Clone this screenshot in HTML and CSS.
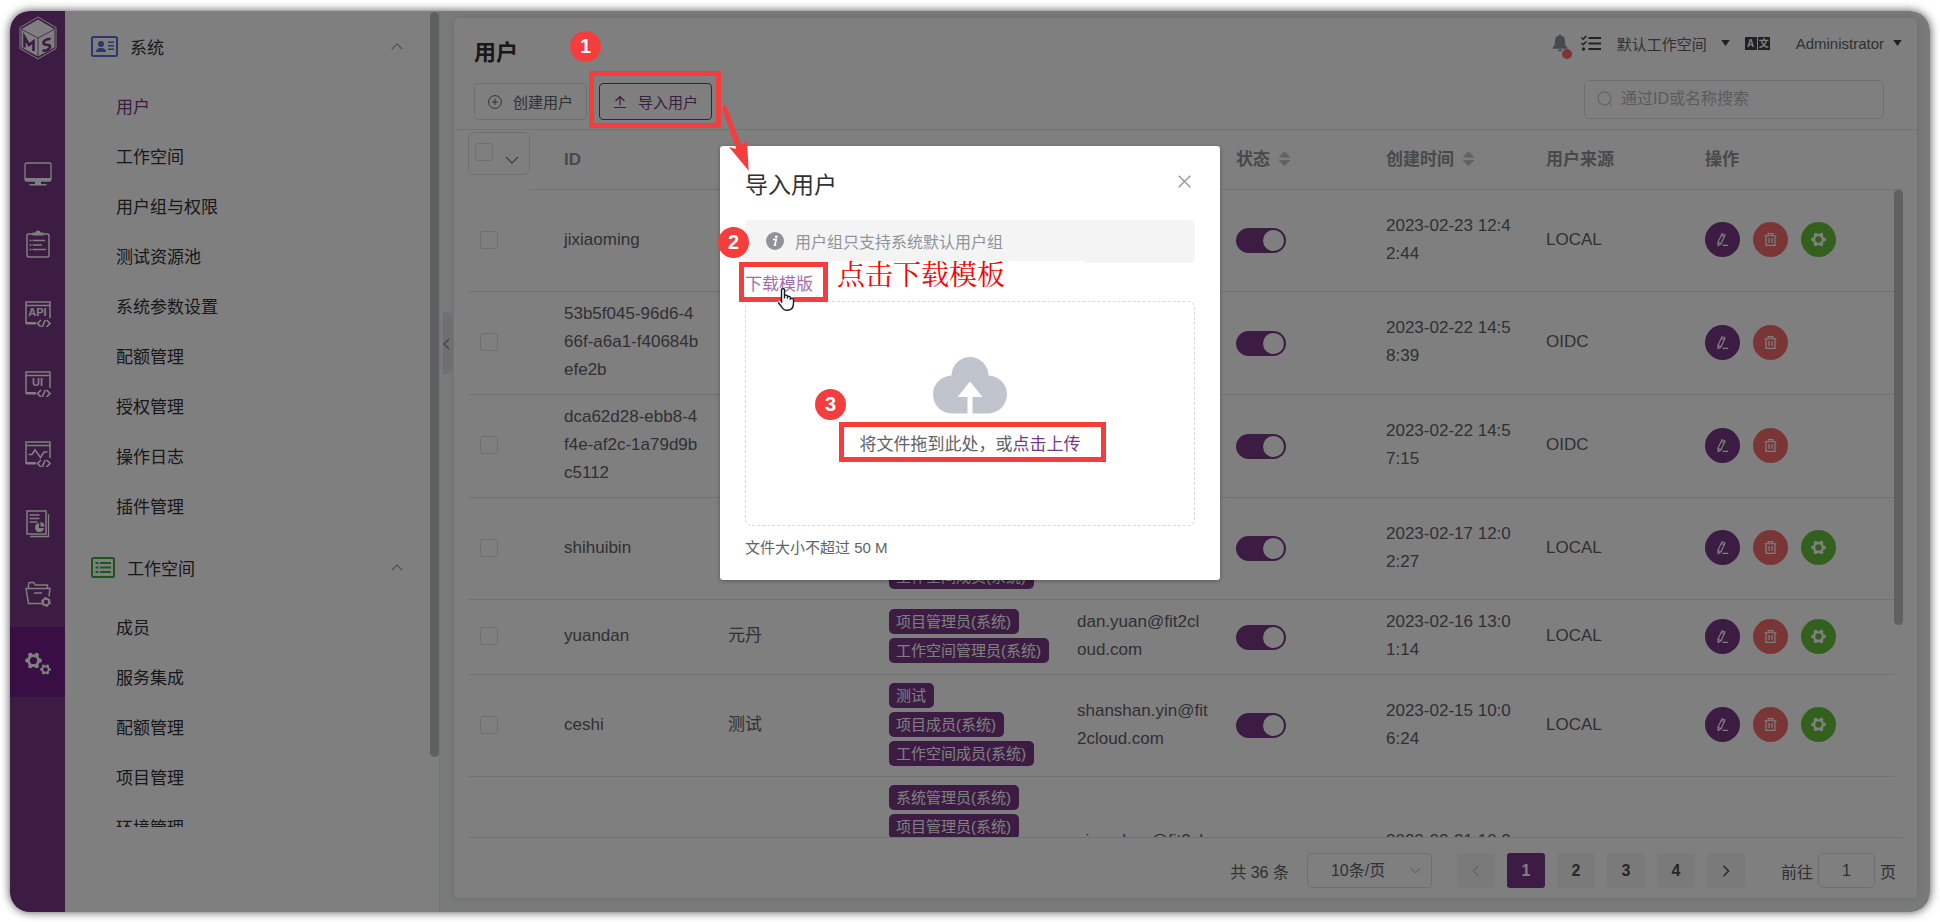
FILE: index.html
```html
<!DOCTYPE html>
<html lang="zh-CN">
<head>
<meta charset="utf-8">
<title>用户</title>
<link rel="stylesheet" href="styles.css">
</head>
<body>
<svg class="sprite" aria-hidden="true">
  <symbol id="i-up" viewBox="0 0 14 8"><path d="M1 7l6-6 6 6" fill="none" stroke="currentColor" stroke-width="1.3"/></symbol>
  <symbol id="i-down" viewBox="0 0 14 8"><path d="M1 1l6 6 6-6" fill="none" stroke="currentColor" stroke-width="1.3"/></symbol>
  <symbol id="i-left" viewBox="0 0 8 14"><path d="M7 1L1 7l6 6" fill="none" stroke="currentColor" stroke-width="1.4"/></symbol>
  <symbol id="i-right" viewBox="0 0 8 14"><path d="M1 1l6 6-6 6" fill="none" stroke="currentColor" stroke-width="1.6"/></symbol>
  <symbol id="i-caret" viewBox="0 0 10 7"><path d="M0 0h10L5 7z" fill="currentColor"/></symbol>
  <symbol id="i-sort" viewBox="0 0 12 16"><path d="M0 6.500L6 0l6 6.500zM0 9h12l-6 6.500z" fill="currentColor"/></symbol>
  <symbol id="i-edit" viewBox="0 0 16 16"><g fill="none" stroke="currentColor" stroke-width="1.3"><path d="M7.500 1.800l3.200 1.400-4.300 9.300-3 1.800-.3-3.300zM6.700 3.600l3.200 1.400M3.200 11l3.200 1.500M8 14.300h6"/></g></symbol>
  <symbol id="i-trash" viewBox="0 0 16 16"><g fill="none" stroke="currentColor" stroke-width="1.300"><path d="M1.500 4h13M5.500 4V1.800h5V4M3.200 4v10.300h9.600V4M6.400 6.500v5.300M9.600 6.500v5.300"/></g></symbol>
  <symbol id="i-gear" viewBox="0 0 16 16"><circle cx="8" cy="8" r="4.700" fill="none" stroke="currentColor" stroke-width="2.600"/><g fill="currentColor"><circle cx="5" cy="2.900" r="2.100"/><circle cx="11" cy="2.900" r="2.100"/><circle cx="13.800" cy="8" r="2.100"/><circle cx="11" cy="13.100" r="2.100"/><circle cx="5" cy="13.100" r="2.100"/><circle cx="2.200" cy="8" r="2.100"/></g></symbol>
  <symbol id="i-window" viewBox="0 0 26 26"><path d="M10 22H1V1h24v16M1 4.500h24" fill="none" stroke="currentColor" stroke-width="1.500"/><path d="M1 21h10v2.500H1z" fill="currentColor"/><path d="M16 19l-3.500 3.500L16 26M21.500 19l3.500 3.500-3.500 3.500M20.200 19l-3 7" fill="none" stroke="currentColor" stroke-width="1.700"/></symbol>
</svg>

<div class="app">
  <nav class="rail" aria-label="主导航">
    <a class="logo" href="#" aria-label="MS">
      <svg width="38" height="44" viewBox="0 0 38 44"><path d="M19 1l18 10.500v21L19 43 1 32.500v-21z" fill="none" stroke="#fff" stroke-width="1"/><path d="M19 3.500L35.500 13v18.500L19 40.500 2.500 31.500V13z" fill="#fff"/><path d="M3 13.500l16 8.500 16-8.500M19 22v18.500" fill="none" stroke="#783887" stroke-width=".8"/><g fill="none" stroke="#783887" stroke-width="2.600"><path d="M5.500 31.500V21l4.500 8 4.500-3.500V35"/><path d="M31.500 23.500c-2-1.500-7 .8-7 3.800 0 2.800 6.500.2 6.500 3.200 0 2.500-5 5.500-7.500 3.500"/></g></svg>
    </a>
    <a href="#" aria-label="工作台"><svg width="28" height="24" viewBox="0 0 28 24"><rect x="1" y="1" width="26" height="18" rx="1.500" fill="none" stroke="currentColor" stroke-width="1.300"/><path d="M1 16h26v3H1zM11 19h6v3h-6zM5.500 22h17v1.500h-17z" fill="currentColor"/></svg></a>
    <a href="#" aria-label="测试跟踪"><svg width="24" height="28" viewBox="0 0 24 28"><rect x="1" y="4" width="22" height="23" rx="1.500" fill="none" stroke="currentColor" stroke-width="1.500"/><path d="M6.500 2.500h3a2.500 2 0 0 1 5 0h3v3h-11z" fill="currentColor"/><path d="M3.500 10.500h2M6.500 10.500h12.500M3.500 15h2M6.500 15h9.500M3.500 19.500h2M6.500 19.500h13.500" stroke="currentColor" stroke-width="1.300"/></svg></a>
    <a href="#" class="win"><svg width="26" height="26"><use href="#i-window"/></svg><b>API</b></a>
    <a href="#" class="win"><svg width="26" height="26"><use href="#i-window"/></svg><b>UI</b></a>
    <a href="#" aria-label="性能测试"><svg width="26" height="26" viewBox="0 0 26 26"><use href="#i-window"/><path d="M3.500 13.500h3.500l3-4.500 5.500 7.500 3.500-5.500h3.500" fill="none" stroke="currentColor" stroke-width="1.600"/></svg></a>
    <a href="#" aria-label="报表统计"><svg width="24" height="28" viewBox="0 0 24 28"><path d="M1 1h19v23H1z" fill="none" stroke="currentColor" stroke-width="1.500"/><path d="M22.500 4v22.500H4" fill="none" stroke="currentColor" stroke-width="1.300"/><path d="M3.500 5h10M3.500 8.500h10M3.500 12h8" stroke="currentColor" stroke-width="1.400"/><path d="M13 13v5h5a4.500 4.500 0 1 1-5-5z" fill="currentColor"/><path d="M14.500 12a4.500 4.500 0 0 1 4 4.500h-4z" fill="currentColor"/></svg></a>
    <a href="#" aria-label="项目设置"><svg width="26" height="26" viewBox="0 0 26 26"><path d="M3.500 7V3l1-1.500h4l2 2.500h12V7M17 22.500H3.500L1 7.500h24l-1 8M9 12h8" fill="none" stroke="currentColor" stroke-width="1.500"/><circle cx="21" cy="21" r="3.200" fill="none" stroke="currentColor" stroke-width="2"/><circle cx="21" cy="21" r="4.500" fill="none" stroke="currentColor" stroke-width="1" stroke-dasharray="2.300 2.400"/></svg></a>
    <a href="#" class="active" aria-label="系统设置"><svg width="26" height="24" viewBox="0 0 26 24"><svg x="0" y="0" width="17" height="17"><use href="#i-gear"/></svg><svg x="15" y="12" width="11" height="11"><use href="#i-gear"/></svg></svg></a>
  </nav>

  <aside class="aside">
    <div class="menu">
      <button class="group" type="button"><svg width="27" height="21" viewBox="0 0 27 21"><rect x="1" y="1" width="25" height="19" rx="1.500" fill="none" stroke="#5670e0" stroke-width="2"/><g fill="#5670e0"><circle cx="10" cy="8" r="3"/><path d="M5 16c0-3 2-4 5-4s5 1 5 4zM17 5.500h6v1.600h-6zM17 9h6v1.600h-6zM17 12.500h6v1.600h-6z"/></g></svg>系统<svg class="fold" width="12" height="7"><use href="#i-up"/></svg></button>
      <a class="on" href="#">用户</a>
      <a href="#">工作空间</a>
      <a href="#">用户组与权限</a>
      <a href="#">测试资源池</a>
      <a href="#">系统参数设置</a>
      <a href="#">配额管理</a>
      <a href="#">授权管理</a>
      <a href="#">操作日志</a>
      <a href="#">插件管理</a>
      <button class="group" type="button"><svg width="24" height="21" viewBox="0 0 24 21"><rect x="1" y="1" width="22" height="19" rx="1.500" fill="none" stroke="#3bab3e" stroke-width="2"/><path d="M4.500 6h3M9 6h11M4.500 10.500h3M9 10.500h11M4.500 15h3M9 15h11" stroke="#3bab3e" stroke-width="2.200"/></svg>工作空间<svg class="fold" width="12" height="7"><use href="#i-up"/></svg></button>
      <a href="#">成员</a>
      <a href="#">服务集成</a>
      <a href="#">配额管理</a>
      <a href="#">项目管理</a>
      <a href="#">环境管理</a>
    </div>
    <span class="thumb"></span>
    <button class="collapse" type="button" aria-label="收起"><svg width="7" height="12"><use href="#i-left"/></svg></button>
  </aside>

  <main class="card">
    <header class="head">
      <div class="title-row">
        <h1>用户</h1>
        <div class="tools">
          <span class="bell"><svg width="16" height="18" viewBox="0 0 16 18"><path d="M8 0l1.200 1.500C12 2.200 13 4.500 13 7c0 4 1 5.500 2.500 7v.8H.5V14C2 12.500 3 11 3 7c0-2.500 1-4.800 3.800-5.500zM6 15.500h4a2 2 0 0 1-4 0z" fill="#909399"/></svg><i></i></span>
          <svg class="tasks" width="20" height="16" viewBox="0 0 20 16"><path d="M7.500 3H20M7.500 8.500H20M7.500 14H20" stroke="#3f4246" stroke-width="2"/><path d="M.5 2.500L2.200 4.200 5.500.8M.5 8l1.700 1.700 3.300-3.400" fill="none" stroke="#3f4246" stroke-width="1.400"/><circle cx="2.500" cy="14" r="1.700" fill="#3f4246"/></svg>
          <button class="drop space" type="button">默认工作空间<svg width="9" height="6"><use href="#i-caret"/></svg></button>
          <button class="lang" type="button" aria-label="语言"><b>A</b><b>文</b></button>
          <button class="drop user" type="button">Administrator<svg width="9" height="6"><use href="#i-caret"/></svg></button>
        </div>
      </div>
      <div class="action-row">
        <button class="btn" type="button"><svg width="14" height="14" viewBox="0 0 14 14"><g fill="none" stroke="currentColor"><circle cx="7" cy="7" r="6.400"/><path d="M4 7h6M7 4v6"/></g></svg>创建用户</button>
        <button class="btn primary" type="button"><svg width="14" height="14" viewBox="0 0 14 14"><path d="M1 12.500h12M7 10.500V2M2.500 6L7 1.700 11.500 6" fill="none" stroke="currentColor" stroke-width="1.200"/></svg>导入用户</button>
        <label class="search"><svg width="16" height="16" viewBox="0 0 16 16"><g fill="none" stroke="currentColor"><circle cx="7.500" cy="7.500" r="6.500"/><path d="M12 12l3 3"/></g></svg><input type="text" placeholder="通过ID或名称搜索" aria-label="搜索"></label>
      </div>
    </header>

    <div class="table-box">
      <table>
        <colgroup><col class="c-check"><col class="c-id"><col class="c-name"><col class="c-group"><col class="c-mail"><col class="c-state"><col class="c-time"><col class="c-src"><col class="c-ops"><col class="c-gut"></colgroup>
        <thead>
          <tr>
            <th class="pick"><div class="pick-all"><input type="checkbox" aria-label="全选"><svg width="14" height="8"><use href="#i-down"/></svg></div></th>
            <th>ID</th><th></th><th></th><th></th>
            <th>状态<svg width="13" height="16"><use href="#i-sort"/></svg></th>
            <th>创建时间<svg width="13" height="16"><use href="#i-sort"/></svg></th>
            <th>用户来源</th><th>操作</th><th></th>
          </tr>
        </thead>
        <tbody>
          <tr class="tall">
            <td><input type="checkbox" aria-label="选择"></td><td>jixiaoming</td><td></td><td></td><td></td>
            <td><input class="switch" type="checkbox" role="switch" aria-label="状态" checked></td>
            <td>2023-02-23 12:4<br>2:44</td><td>LOCAL</td>
            <td><div class="ops"><button type="button" class="edit" aria-label="编辑"><svg><use href="#i-edit"/></svg></button><button type="button" class="del" aria-label="删除"><svg><use href="#i-trash"/></svg></button><button type="button" class="set" aria-label="设置"><svg><use href="#i-gear"/></svg></button></div></td>
          </tr>
          <tr>
            <td><input type="checkbox" aria-label="选择"></td><td>53b5f045-96d6-4<br>66f-a6a1-f40684b<br>efe2b</td><td></td><td></td><td></td>
            <td><input class="switch" type="checkbox" role="switch" aria-label="状态" checked></td>
            <td>2023-02-22 14:5<br>8:39</td><td>OIDC</td>
            <td><div class="ops"><button type="button" class="edit" aria-label="编辑"><svg><use href="#i-edit"/></svg></button><button type="button" class="del" aria-label="删除"><svg><use href="#i-trash"/></svg></button></div></td>
          </tr>
          <tr>
            <td><input type="checkbox" aria-label="选择"></td><td>dca62d28-ebb8-4<br>f4e-af2c-1a79d9b<br>c5112</td><td></td><td></td><td></td>
            <td><input class="switch" type="checkbox" role="switch" aria-label="状态" checked></td>
            <td>2023-02-22 14:5<br>7:15</td><td>OIDC</td>
            <td><div class="ops"><button type="button" class="edit" aria-label="编辑"><svg><use href="#i-edit"/></svg></button><button type="button" class="del" aria-label="删除"><svg><use href="#i-trash"/></svg></button></div></td>
          </tr>
          <tr class="tall">
            <td><input type="checkbox" aria-label="选择"></td><td>shihuibin</td><td></td>
            <td class="low"><div class="tags"><span>工作空间成员(系统)</span></div></td><td></td>
            <td><input class="switch" type="checkbox" role="switch" aria-label="状态" checked></td>
            <td>2023-02-17 12:0<br>2:27</td><td>LOCAL</td>
            <td><div class="ops"><button type="button" class="edit" aria-label="编辑"><svg><use href="#i-edit"/></svg></button><button type="button" class="del" aria-label="删除"><svg><use href="#i-trash"/></svg></button><button type="button" class="set" aria-label="设置"><svg><use href="#i-gear"/></svg></button></div></td>
          </tr>
          <tr class="short">
            <td><input type="checkbox" aria-label="选择"></td><td>yuandan</td><td>元丹</td>
            <td><div class="tags"><span>项目管理员(系统)</span><span>工作空间管理员(系统)</span></div></td>
            <td>dan.yuan@fit2cl<br>oud.com</td>
            <td><input class="switch" type="checkbox" role="switch" aria-label="状态" checked></td>
            <td>2023-02-16 13:0<br>1:14</td><td>LOCAL</td>
            <td><div class="ops"><button type="button" class="edit" aria-label="编辑"><svg><use href="#i-edit"/></svg></button><button type="button" class="del" aria-label="删除"><svg><use href="#i-trash"/></svg></button><button type="button" class="set" aria-label="设置"><svg><use href="#i-gear"/></svg></button></div></td>
          </tr>
          <tr class="tall">
            <td><input type="checkbox" aria-label="选择"></td><td>ceshi</td><td>测试</td>
            <td><div class="tags"><span>测试</span><span>项目成员(系统)</span><span>工作空间成员(系统)</span></div></td>
            <td>shanshan.yin@fit<br>2cloud.com</td>
            <td><input class="switch" type="checkbox" role="switch" aria-label="状态" checked></td>
            <td>2023-02-15 10:0<br>6:24</td><td>LOCAL</td>
            <td><div class="ops"><button type="button" class="edit" aria-label="编辑"><svg><use href="#i-edit"/></svg></button><button type="button" class="del" aria-label="删除"><svg><use href="#i-trash"/></svg></button><button type="button" class="set" aria-label="设置"><svg><use href="#i-gear"/></svg></button></div></td>
          </tr>
          <tr class="last">
            <td></td><td></td><td></td>
            <td class="high"><div class="tags"><span>系统管理员(系统)</span><span>项目管理员(系统)</span></div></td>
            <td>xiang.han@fit2cl<br>&nbsp;</td><td></td>
            <td>2023-02-21 10:2<br>&nbsp;</td><td></td><td></td>
          </tr>
        </tbody>
      </table>
      <span class="thumb"></span>
    </div>

    <footer class="pager">
      <span>共 36 条</span>
      <div class="size"><select aria-label="每页条数"><option>10条/页</option></select><svg width="11" height="7"><use href="#i-down"/></svg></div>
      <div class="pages">
        <button type="button" disabled aria-label="上一页"><svg width="8" height="12"><use href="#i-left"/></svg></button>
        <button type="button" class="current">1</button>
        <button type="button">2</button>
        <button type="button">3</button>
        <button type="button">4</button>
        <button type="button" aria-label="下一页"><svg width="8" height="12"><use href="#i-right"/></svg></button>
      </div>
      <label class="jump">前往<input type="text" value="1">页</label>
    </footer>
  </main>

  <div class="overlay"></div>
</div>

<section class="dialog" role="dialog" aria-labelledby="dlg-title">
  <header><h2 id="dlg-title">导入用户</h2><button type="button" aria-label="关闭"><svg width="13" height="13" viewBox="0 0 13 13"><path d="M.7.700l11.600 11.600M12.300.700L.700 12.300" stroke="#909399" stroke-width="1.300"/></svg></button></header>
  <p class="alert"><svg width="18" height="18" viewBox="0 0 18 18"><circle cx="9" cy="9" r="9" fill="#909399"/><circle cx="10.300" cy="4.800" r="1.400" fill="#fff"/><path d="M7 7.500h3.300L8.700 13.300h1.500" fill="none" stroke="#fff" stroke-width="1.600"/></svg>用户组只支持系统默认用户组</p>
  <a class="template" href="#">下载模版</a>
  <div class="upload">
    <svg width="74" height="57" viewBox="0 0 74 57"><path d="M18.500 18.500A18.500 18.500 0 0 1 55.500 18.500C66 19 74 27 74 37c0 11-8.500 19.500-19 19.500H39.500V40h10L37 24.500 24.500 40h10v16.500H19C8.500 56.500 0 48 0 37 0 27 8 19 18.500 18.500z" fill="#c0c4cc"/></svg>
    <p>将文件拖到此处，或<a href="#">点击上传</a></p>
  </div>
  <p class="tip">文件大小不超过 50 M</p>

  <strong class="note">点击下载模板</strong>
  <span class="frame frame-link"></span>
  <span class="badge badge-2">2</span>
  <span class="badge badge-3">3</span>
  <span class="frame frame-drop"></span>
  <svg class="hand" width="19" height="24" viewBox="0 0 19 24"><path d="M4.500 2.500a1.600 1.600 0 0 1 3 0v6c1-.8 2.400-.5 3 .5 1-.6 2.300-.3 2.900.8 1.500-.5 3 .3 3.100 1.900V16c0 4.500-2 7.300-6.500 7.300-3.500 0-4.700-1.800-6-4.300L1.200 15.500C.8 14 2.300 13.200 3.300 14.200l1.200 1.600z" fill="#fff"/><path d="M4.500 15.800V2.500a1.600 1.600 0 0 1 3 0v9V8.700c1-1 2.700-.6 3 .5v2.300-1.800c1-.8 2.500-.3 2.900.8v1.500c1.500-1.300 3-.6 3.100.9V16c0 4.500-2 7.300-6.500 7.300-3.500 0-4.700-1.800-6-4.300L1.200 15.500" fill="none" stroke="#15182e" stroke-width="1.400"/></svg>
</section>

<span class="badge badge-1">1</span>
<span class="frame frame-import"></span>
<svg class="arrow" width="30" height="68" viewBox="0 0 30 68"><path d="M1.700 3.500L6 2l15.500 40.500L27 38l1.700 29.700L9 44l7.300 2z" fill="#f43d3d"/></svg>
</body>
</html>
```

FILE: styles.css
```css
* { box-sizing: border-box; }

:root {
  --purple: #783887;
  --red: #f43d3d;
  --line: #e4e6ea;
  --text: #606266;
}

body {
  margin: 0;
  height: 100vh;
  padding: 11px 10px 10px;
  position: relative;
  overflow: hidden;
  background: #fff;
  color: var(--text);
  font-family: "Liberation Sans", "Noto Sans CJK SC", sans-serif;
  font-size: 16px;
}

button, input, select { font: inherit; color: inherit; margin: 0; }
button { border: 0; padding: 0; background: none; cursor: pointer; }
a { color: inherit; text-decoration: none; }
h1, h2, p { margin: 0; }
svg { flex: none; }
.sprite { position: absolute; width: 0; height: 0; }

.app {
  position: relative;
  display: flex;
  height: 100%;
  border-radius: 20px;
  overflow: hidden;
  background: #f3f5f4;
}
.overlay { position: absolute; inset: 0; background: rgba(0, 0, 0, .5); }
body::before {
  content: "";
  position: absolute;
  inset: 11px 10px 10px;
  border-radius: 20px;
  box-shadow: 0 0 10px rgba(0, 0, 0, .7);
}

/* icon rail */
.rail { width: 55px; flex: none; background: var(--purple); color: #fff; }
.rail a { display: flex; height: 70px; padding-top: 3px; align-items: center; justify-content: center; position: relative; }
.rail .logo { height: 126px; align-items: flex-start; padding-top: 5px; }
.rail .active { background: #701c88; }
.rail .win b { position: absolute; inset: 0; line-height: 71px; text-align: center; font-size: 11px; }

/* side menu */
.aside { position: relative; width: 375px; flex: none; padding: 0 0 85px; background: #fff; border-right: 1px solid var(--line); }
.menu { height: 100%; overflow: hidden; font-size: 17px; color: #303133; }
.menu a { display: block; height: 50px; line-height: 52px; padding-left: 51px; }
.menu .on { color: var(--purple); }
.group { display: flex; align-items: center; gap: 12px; width: 100%; height: 70px; padding: 0 36px 0 26px; }
.group + a { margin-top: 1px; }
.fold { margin-left: auto; color: #909399; }
.thumb { position: absolute; right: 0; width: 9px; border-radius: 5px; background: #c1c1c1; }
.aside .thumb { top: 1px; height: 745px; }
.collapse { position: absolute; left: 378px; top: 301px; width: 10px; height: 63px; display: flex; align-items: center; border-radius: 0 10px 10px 0; background: #dcdfe6; color: #808389; }

/* card */
.card { flex: 1; min-width: 0; margin: 7px 13px 14px 14px; display: flex; flex-direction: column; background: #fff; border-radius: 5px; box-shadow: 0 0 10px rgba(0, 0, 0, .12); }
.head { border-bottom: 1px solid var(--line); padding: 0 19px 9px 20px; }
.title-row { display: flex; justify-content: space-between; height: 65px; }
h1 { font-size: 22px; line-height: 70px; color: #303133; }
.tools { display: flex; align-items: center; height: 50px; font-size: 15px; }
.bell { position: relative; display: flex; margin-right: 13px; }
.bell i { position: absolute; right: -4px; bottom: -7px; width: 10px; height: 10px; border-radius: 50%; background: #f56c6c; }
.tasks { margin-right: 16px; }
.drop { display: flex; align-items: center; gap: 14px; }
.drop svg { color: #3f4246; }
.user { gap: 9px; margin-right: -4px; }
.lang { display: flex; gap: 1px; margin: 0 26px 0 15px; font-size: 10px; line-height: 13px; color: #fff; }
.lang b { width: 12px; background: #3f4246; text-align: center; }
.action-row { display: flex; align-items: center; height: 37px; }
.btn { display: flex; align-items: center; gap: 11px; width: 113px; height: 37px; padding-left: 13px; margin-right: 12px; border: 1px solid #dcdfe6; border-radius: 4px; font-size: 15px; white-space: nowrap; }
.btn.primary { border-color: var(--purple); color: var(--purple); }
.search { display: flex; align-items: center; gap: 8px; width: 300px; height: 39px; margin-left: auto; margin-right: 14px; padding: 0 12px; border: 1px solid #dcdfe6; border-radius: 5px; color: #b4b7be; margin-top: -5px; }
.search input { flex: 1; min-width: 0; padding: 0; border: 0; outline: 0; background: none; }
.search input::placeholder { color: #b4b7be; opacity: 1; }

/* table */
.table-box { position: relative; flex: 1; min-height: 0; margin: 0 14px; overflow: hidden; }
.table-box .thumb { top: 60px; height: 435px; }
table { width: 100%; table-layout: fixed; border-collapse: separate; border-spacing: 0; font-size: 17px; line-height: 28px; }
.c-check { width: 83px; }
.c-id { width: 164px; }
.c-name { width: 161px; }
.c-group { width: 188px; }
.c-mail { width: 159px; }
.c-state { width: 150px; }
.c-time { width: 160px; }
.c-src { width: 159px; }
.c-ops { width: 202px; }
.c-gut { width: 9px; }
th, td { padding: 8px 0 10px 13px; text-align: left; white-space: nowrap; border-bottom: 1px solid var(--line); vertical-align: middle; }
td:first-child { padding-left: 12px; }
th { height: 60px; padding: 0 0 0 13px; color: #909399; }
th svg { margin-left: 8px; vertical-align: -2px; color: #c0c4cc; }
th.pick { padding: 2px 0 0; border: 0; vertical-align: top; background: linear-gradient(var(--line), var(--line)) right bottom / 21px 1px no-repeat; }
.pick-all { display: flex; align-items: center; gap: 12px; width: 62px; height: 43px; padding-left: 6px; border: 1px solid #dcdfe6; border-radius: 6px; }
.pick-all input { margin-bottom: 4px; }
.pick-all svg { margin: 12px 0 0; color: #808389; }
.tall { height: 102px; }
.short { height: 74px; }
.last { height: 159px; }
td.low { vertical-align: bottom; }
td.high { vertical-align: top; }
input[type="checkbox"] { appearance: none; display: block; width: 18px; height: 18px; border: 1px solid #dcdfe6; border-radius: 3px; background: #fff; }
input[type="checkbox"].switch { position: relative; width: 50px; height: 25px; border: 0; border-radius: 13px; background: var(--purple); margin-top: 2px; }
.switch::before { content: ""; position: absolute; right: 2px; top: 2px; width: 21px; height: 21px; border-radius: 50%; background: #fff; }
.tags { display: flex; flex-direction: column; align-items: flex-start; gap: 4px; }
.tags span { height: 25px; padding: 0 8px 0 7px; border-radius: 5px; background: var(--purple); color: #fff; font-size: 15px; line-height: 25px; }
.ops { display: flex; gap: 13px; }
.ops button { display: flex; align-items: center; justify-content: center; width: 35px; height: 35px; border-radius: 50%; color: #fff; }
.ops svg { width: 15px; height: 15px; }
.edit { background: var(--purple); }
.del { background: #f56c6c; }
.set { background: #67c23a; }

/* pagination */
.pager { display: flex; align-items: center; justify-content: flex-end; margin: 0 14px; padding: 15px 7px 10px 0; border-top: 1px solid var(--line); }
.size { position: relative; width: 125px; margin: 0 25px 0 18px; }
.size select { appearance: none; display: block; width: 100%; height: 35px; padding: 0 23px; border: 1px solid #dcdfe6; border-radius: 4px; background: none; }
.size svg { position: absolute; right: 11px; top: 14px; color: #c0c4cc; }
.pages { display: flex; gap: 12px; margin-right: 36px; }
.pages button { display: flex; align-items: center; justify-content: center; width: 38px; height: 35px; border-radius: 3px; background: #f4f4f5; font-weight: 700; color: #4c4e52; }
.pages button:disabled { color: #c0c4cc; }
.pages .current { background: var(--purple); color: #fff; }
.jump { display: flex; align-items: center; gap: 5px; }
.jump input { width: 57px; height: 35px; border: 1px solid #dcdfe6; border-radius: 5px; background: none; text-align: center; }

/* dialog */
.dialog { position: absolute; left: 50%; top: 146px; width: 500px; margin-left: -250px; padding: 25px 25px 20px; background: #fff; border-radius: 3px; box-shadow: 0 1px 4px rgba(0, 0, 0, .3); }
.dialog header { display: flex; align-items: flex-start; justify-content: space-between; height: 28px; padding-right: 4px; margin-bottom: 21px; }
.dialog header button { display: flex; margin-top: 4px; }
h2 { font-size: 23px; line-height: 28px; font-weight: 400; color: #303133; }
.alert { display: flex; align-items: center; gap: 11px; height: 43px; padding: 0 0 1px 21px; border-radius: 5px; background: #f4f4f5; color: #909399; }
.template { display: block; width: 72px; height: 38px; font-size: 17px; line-height: 44px; color: #a06fab; }
.upload { display: flex; flex-direction: column; align-items: center; height: 225px; padding-top: 55px; border: 1px dashed #d9d9d9; border-radius: 7px; }
.upload p { margin-top: 18px; font-size: 17px; line-height: 26px; }
.upload a { color: var(--purple); }
.tip { padding-top: 9px; font-size: 15px; line-height: 25px; }

/* callouts */
.frame { position: absolute; border: 5px solid var(--red); }
.badge { position: absolute; width: 31px; height: 31px; border-radius: 50%; background: var(--red); color: #fff; font-size: 20px; font-weight: 700; line-height: 31px; text-align: center; }
.badge-1 { left: 570px; top: 31px; }
.badge-2 { left: -2px; top: 81px; }
.badge-3 { left: 95px; top: 243px; }
.frame-import { left: 589px; top: 71px; width: 132px; height: 57px; }
.frame-link { left: 19px; top: 116px; width: 89px; height: 40px; }
.frame-drop { left: 119px; top: 276px; width: 267px; height: 40px; }
.note { position: absolute; left: 112px; top: 115px; width: 252px; padding-left: 5px; background: #fff; color: #f00; font-family: "Liberation Serif", "Noto Serif CJK SC", serif; font-size: 28px; font-weight: 400; line-height: 30px; }
.hand { position: absolute; left: 57px; top: 141px; }
.arrow { position: absolute; left: 720px; top: 103px; overflow: visible; }
```
